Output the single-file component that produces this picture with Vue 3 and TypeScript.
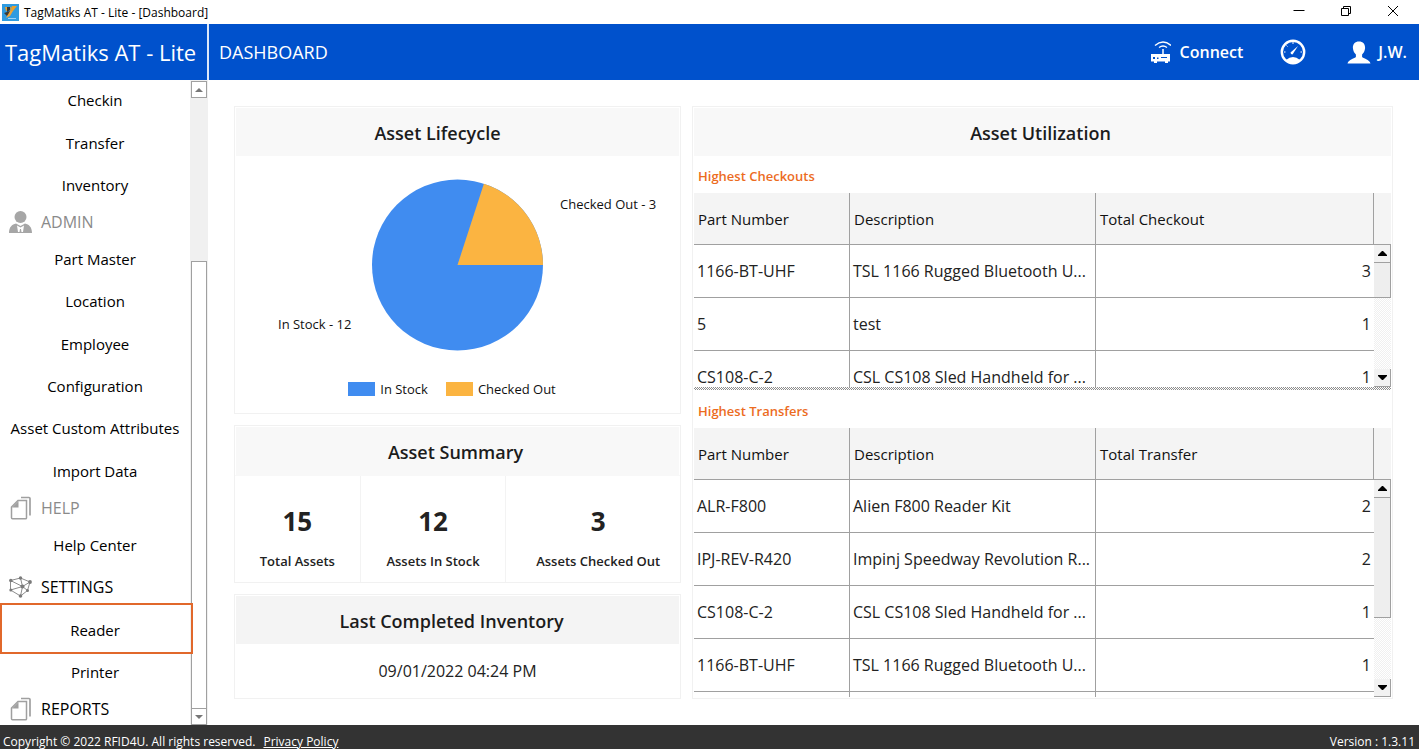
<script setup lang="ts">
interface NavRow {
  label: string
  heading?: boolean
  icon?: 'person' | 'pages' | 'network'
  muted?: boolean
  tall?: boolean
  selected?: boolean
}

interface AssetRow {
  part: string
  description: string
  total: number
}

interface AssetTable {
  id: string
  caption: string
  totalLabel: string
  rows: AssetRow[]
}

const navRows: NavRow[] = [
  { label: 'Checkin' },
  { label: 'Transfer' },
  { label: 'Inventory' },
  { label: 'ADMIN', heading: true, icon: 'person', muted: true },
  { label: 'Part Master' },
  { label: 'Location' },
  { label: 'Employee' },
  { label: 'Configuration' },
  { label: 'Asset Custom Attributes' },
  { label: 'Import Data' },
  { label: 'HELP', heading: true, icon: 'pages', muted: true },
  { label: 'Help Center' },
  { label: 'SETTINGS', heading: true, icon: 'network', tall: true },
  { label: 'Reader', selected: true },
  { label: 'Printer' },
  { label: 'REPORTS', heading: true, icon: 'pages' },
]

const summary = [
  { key: 'total', value: 15, label: 'Total Assets' },
  { key: 'stock', value: 12, label: 'Assets In Stock' },
  { key: 'out', value: 3, label: 'Assets Checked Out' },
]

const tables: AssetTable[] = [
  {
    id: 'checkouts',
    caption: 'Highest Checkouts',
    totalLabel: 'Total Checkout',
    rows: [
      { part: '1166-BT-UHF', description: 'TSL 1166 Rugged Bluetooth U...', total: 3 },
      { part: '5', description: 'test', total: 1 },
      { part: 'CS108-C-2', description: 'CSL CS108 Sled Handheld for ...', total: 1 },
    ],
  },
  {
    id: 'transfers',
    caption: 'Highest Transfers',
    totalLabel: 'Total Transfer',
    rows: [
      { part: 'ALR-F800', description: 'Alien F800 Reader Kit', total: 2 },
      { part: 'IPJ-REV-R420', description: 'Impinj Speedway Revolution R...', total: 2 },
      { part: 'CS108-C-2', description: 'CSL CS108 Sled Handheld for ...', total: 1 },
      { part: '1166-BT-UHF', description: 'TSL 1166 Rugged Bluetooth U...', total: 1 },
    ],
  },
]
</script>

<template>
  <div class="window">
    <div class="titlebar">
      <svg class="app-icon" width="17" height="17" viewBox="0 0 17 17" aria-hidden="true">
        <rect width="17" height="17" fill="#2f9be0" />
        <path d="M3 3h6l-1 3-4 1zM10 2l5 0-4 5-3 0z" fill="#e9a02c" />
        <path d="M5 3h3v3l-3 2zM2 9l6-2 2 1-5 4z" fill="#3b3a34" />
        <path d="M8 7l3 0-3 5-4 2z" fill="#f0a53a" />
        <path d="M6 14h8v1H6z" fill="#9ed2f5" />
      </svg>
      <span class="window-title">TagMatiks AT - Lite - [Dashboard]</span>
      <div class="window-buttons">
        <button type="button" aria-label="Minimize">
          <svg width="12" height="12" viewBox="0 0 12 12"><path d="M0.5 5.5h11" stroke="#000" /></svg>
        </button>
        <button type="button" aria-label="Restore">
          <svg width="12" height="12" viewBox="0 0 12 12" fill="none" stroke="#000">
            <path d="M1.500 3.500h7v7h-7z" /><path d="M3.500 3.500v-2h7v7h-2" />
          </svg>
        </button>
        <button type="button" aria-label="Close">
          <svg width="12" height="12" viewBox="0 0 12 12"><path d="M1 1l10 10M11 1L1 11" stroke="#000" /></svg>
        </button>
      </div>
    </div>

    <header class="header">
      <div class="brand">TagMatiks AT - Lite</div>
      <h1>DASHBOARD</h1>
      <div class="actions">
        <button type="button" class="action connect">
          <svg width="20" height="23" viewBox="0 0 20 23" fill="none" aria-hidden="true">
            <path d="M4 4.500Q12 -2.500 20 4.500" stroke="#fff" stroke-width="1.400" />
            <path d="M8 6.500Q12 3.500 16 6.500" stroke="#fff" stroke-width="1.300" />
            <path d="M12 8v5" stroke="#fff" stroke-width="1.500" />
            <path d="M0 13h19v7.500H0z" fill="#fff" />
            <path d="M3 20h3v2H3zM14 20h3v2h-3z" fill="#fff" />
            <path d="M2 16h2v2H2zM6 16.500h1.500v1.500H6zM10 16h6v1h-6z" fill="#0051cc" />
          </svg>
          <span>Connect</span>
        </button>
        <button type="button" class="action gauge" aria-label="Performance">
          <svg width="26" height="26" viewBox="0 0 26 26" aria-hidden="true">
            <circle cx="13" cy="13" r="11.200" fill="none" stroke="#fff" stroke-width="2.400" />
            <path d="M6 21Q13 15 20 21Q17 25 13 25T6 21z" fill="#fff" />
            <path d="M10.500 13.500l7.500-6.500-5.500 8.500a2 2 0 0 1-2-2z" fill="#fff" />
            <path d="M4 13h1.500M13 3v2M6.500 6.500l1 1M20.500 13h1.500" stroke="#fff" />
          </svg>
        </button>
        <button type="button" class="action user">
          <svg width="24" height="23" viewBox="0 0 24 23" fill="#fff" aria-hidden="true">
            <path d="M12 0.500c4 0 6.300 2.700 6.100 6.500-.2 3-1.600 5.200-3 6.500v2.500c1 1.500 7.400 2.200 8.400 6.500H.5c1-4.300 7.400-5 8.400-6.500v-2.500c-1.400-1.300-2.800-3.500-3-6.500C5.700 3.200 8 .5 12 .5z" />
          </svg>
          <span>J.W.</span>
        </button>
      </div>
    </header>

    <div class="body">
      <aside class="sidebar">
        <nav class="nav" aria-label="Main">
          <template v-for="row in navRows" :key="row.label">
            <div v-if="row.heading" class="nav-heading" :class="{ muted: row.muted, tall: row.tall }">
              <svg v-if="row.icon === 'person'" width="23" height="22" viewBox="0 0 23 22" aria-hidden="true">
                <circle cx="11.500" cy="6" r="6" fill="#a6a6a6" />
                <path d="M0 22c0-6 3-8.500 7-9.500l4.500 2.500 4.500-2.500c4 1 7 3.500 7 9.500z" fill="#a6a6a6" />
                <path d="M8 14.500l3.500 2 3.500-2-1 6.500h-1.500l-.5-3h-1l-.5 3H9z" fill="#fff" />
              </svg>
              <svg v-else-if="row.icon === 'pages'" width="23" height="24" viewBox="0 0 23 24" fill="none" stroke="#a0a0a0" aria-hidden="true">
                <path d="M9 4.500h8.500v17.500q0 .8-1 .8H3.500q-1 0-1-1V11z" stroke-width="1.500" />
                <path d="M9.500 5v6.500H3z" fill="#a0a0a0" stroke="none" />
                <path d="M12 1.500h8q1 0 1 1v17" stroke-width="1.700" />
              </svg>
              <svg v-else width="23" height="22" viewBox="0 0 23 22" fill="none" stroke="#8c8c8c" aria-hidden="true">
                <path d="M1.500 4.500L11.500 2l9.500 4-2.500 8.500-7 5.500-10-6zM1.500 4.500l12 6L21 6M13.500 10.500L11.500 20M1.500 14l12-3.500L11.500 2M13.500 10.500l5 4" />
                <g fill="#7a7a7a" stroke="none">
                  <circle cx="1.800" cy="4.500" r="1.700" /><circle cx="11.500" cy="2" r="1.700" />
                  <circle cx="21" cy="6" r="1.900" /><circle cx="18.500" cy="14.500" r="1.500" />
                  <circle cx="11.500" cy="20" r="1.800" /><circle cx="1.800" cy="14" r="1.500" />
                  <circle cx="13.500" cy="10.500" r="2" />
                </g>
              </svg>
              <span>{{ row.label }}</span>
            </div>
            <a v-else href="#" class="nav-item" :class="{ selected: row.selected }">{{ row.label }}</a>
          </template>
        </nav>
        <div class="side-scroll">
          <button type="button" aria-label="Scroll menu up">
            <svg width="8" height="4" viewBox="0 0 8 4"><path d="M0 4l4-4 4 4z" fill="#777" /></svg>
          </button>
          <div class="side-track"></div>
          <div class="side-thumb"></div>
          <button type="button" aria-label="Scroll menu down">
            <svg width="8" height="4" viewBox="0 0 8 4"><path d="M0 0l4 4 4-4z" fill="#777" /></svg>
          </button>
        </div>
      </aside>

      <main class="main">
        <div class="left">
          <section class="card lifecycle">
            <h2>Asset Lifecycle</h2>
            <svg class="pie" width="445" height="212" viewBox="0 0 445 212" role="img" aria-label="Assets in stock and checked out">
              <circle cx="222.500" cy="109" r="85.500" fill="#408cf0" />
              <path d="M222.500 109L248.900 27.700A85.500 85.500 0 0 1 308 109z" fill="#fbb441" />
              <text x="325" y="53">Checked Out - 3</text>
              <text x="43" y="173">In Stock - 12</text>
            </svg>
            <div class="legend">
              <span class="swatch blue"></span><span class="legend-label">In Stock</span>
              <span class="swatch orange"></span><span class="legend-label">Checked Out</span>
            </div>
          </section>

          <section class="card summary">
            <h2>Asset Summary</h2>
            <div class="stats">
              <div v-for="s in summary" :key="s.key" class="stat" :class="s.key">
                <strong>{{ s.value }}</strong>
                <span>{{ s.label }}</span>
              </div>
            </div>
          </section>

          <section class="card last">
            <h2>Last Completed Inventory</h2>
            <p>09/01/2022 04:24 PM</p>
          </section>
        </div>

        <section class="card utilization">
          <h2>Asset Utilization</h2>
          <div v-for="t in tables" :key="t.id" class="block" :class="t.id">
            <h3 :id="t.id">{{ t.caption }}</h3>
            <div class="viewport">
              <table :aria-labelledby="t.id">
                <colgroup><col class="c-part" /><col class="c-desc" /><col /></colgroup>
                <thead>
                  <tr><th scope="col">Part Number</th><th scope="col">Description</th><th scope="col">{{ t.totalLabel }}</th></tr>
                </thead>
                <tbody>
                  <tr v-for="r in t.rows" :key="r.part">
                    <td>{{ r.part }}</td><td>{{ r.description }}</td><td class="num">{{ r.total }}</td>
                  </tr>
                  <tr v-if="t.id === 'transfers'"><td></td><td></td><td class="num"></td></tr>
                </tbody>
              </table>
              <div class="scroll">
                <div class="cap"></div>
                <button type="button" aria-label="Scroll up">
                  <svg width="9" height="5" viewBox="0 0 9 5"><path d="M0 5V4l4-4h1l4 4v1z" fill="#000" /></svg>
                </button>
                <div class="thumb"></div>
                <div class="track"></div>
                <button type="button" aria-label="Scroll down">
                  <svg width="9" height="5" viewBox="0 0 9 5"><path d="M0 0v1l4 4h1l4-4V0z" fill="#000" /></svg>
                </button>
              </div>
            </div>
          </div>
        </section>
      </main>
    </div>

    <footer class="footer">
      <span>Copyright © 2022 RFID4U. All rights reserved.</span>
      <a href="#">Privacy Policy</a>
      <span class="version">Version : 1.3.11</span>
    </footer>
  </div>
</template>

<style>
body {
  background: #fff;
}
</style>

<style scoped>
* {
  box-sizing: border-box;
}
.window {
  display: flex;
  flex-direction: column;
  height: 100vh;
  overflow: hidden;
  font-family: 'Open Sans', 'Noto Sans', sans-serif;
  font-size: 15px;
  color: #111;
}
button {
  margin: 0;
  padding: 0;
  border: 0;
  background: none;
  color: inherit;
  font: inherit;
}
svg {
  display: block;
  flex: none;
}
h1,
h2,
h3,
p {
  margin: 0;
}

.titlebar {
  display: flex;
  flex: none;
  align-items: center;
  height: 24px;
  padding-left: 2px;
  font-size: 12px;
  color: #000;
}
.window-title {
  margin-left: 5px;
}
.window-buttons {
  display: flex;
  margin-left: auto;
  padding-bottom: 3px;
}
.window-buttons button {
  display: flex;
  align-items: center;
  justify-content: center;
  width: 47px;
  height: 21px;
}
.window-buttons button:last-child {
  margin-right: 3px;
}

.header {
  display: flex;
  flex: none;
  align-items: center;
  height: 56px;
  background: #0051cc;
  color: #fff;
}
.brand {
  display: flex;
  align-items: center;
  width: 209px;
  height: 56px;
  padding-left: 5px;
  border-right: 2px solid #dce8fa;
  font-size: 22px;
  font-weight: 500;
  white-space: nowrap;
}
h1 {
  margin-left: 10px;
  font-size: 18px;
  font-weight: 500;
}
.actions {
  display: flex;
  align-items: center;
  margin-left: auto;
  padding-right: 12px;
  font-size: 16px;
  font-weight: 600;
}
.action {
  display: flex;
  align-items: center;
  gap: 9px;
}
.gauge {
  margin-left: 37px;
}
.user {
  gap: 7px;
  margin-left: 41px;
}

.body {
  display: flex;
  flex: 1;
  min-height: 0;
}
.sidebar {
  display: flex;
  flex: none;
  width: 208px;
}
.nav {
  display: flex;
  flex: none;
  flex-direction: column;
  width: 190px;
  margin-top: -1px;
}
.nav-item {
  position: relative;
  display: flex;
  flex: 4 1 0;
  align-items: center;
  justify-content: center;
  min-height: 0;
  color: #000;
  text-decoration: none;
  white-space: nowrap;
}
.nav-item.selected::after {
  content: '';
  position: absolute;
  z-index: 1;
  inset: -5px -3px -3px 0;
  border: 2px solid #e1682b;
}
.nav-heading {
  display: flex;
  flex: 3 1 0;
  align-items: center;
  gap: 9px;
  min-height: 0;
  padding-left: 9px;
  font-size: 16px;
  color: #000;
}
.nav-heading.muted {
  color: #8a8a8a;
}
.nav-heading.tall {
  flex-grow: 4;
}
.side-scroll {
  display: flex;
  flex-direction: column;
  width: 18px;
  padding: 1px 1px 0;
  background: #f0f0f0;
}
.side-scroll button {
  display: flex;
  flex: none;
  align-items: center;
  justify-content: center;
  height: 17px;
  border: 1px solid #a0a0a0;
  background: #fff;
}
.side-track {
  flex: 163;
}
.side-thumb {
  flex: 447;
  border: 1px solid #a0a0a0;
  border-bottom: 0;
  background: #fff;
}

.main {
  display: grid;
  flex: 1;
  grid-template-columns: minmax(0, 447fr) minmax(0, 701fr);
  gap: 11px;
  min-width: 0;
  padding: 26px;
}
.left {
  display: flex;
  flex-direction: column;
  gap: 11px;
  min-height: 0;
}
.card {
  display: flex;
  flex-direction: column;
  min-height: 0;
  padding-top: 1px;
  border: 1px solid #f1f1f1;
  background: #fff;
}
h2 {
  display: flex;
  flex: none;
  align-items: center;
  justify-content: center;
  height: 48px;
  margin: 0 1px;
  padding-top: 2px;
  padding-right: 4px;
  background: #f8f8f8;
  font-size: 18px;
  font-weight: 600;
  color: #1c1c1c;
}
.lifecycle {
  flex: 306;
}
.lifecycle h2 {
  padding-right: 40px;
}
.pie {
  align-self: center;
  font-size: 13px;
  fill: #111;
}
.legend {
  display: flex;
  align-items: center;
  justify-content: center;
  padding: 12px 11px 0 0;
  font-size: 13px;
}
.swatch {
  width: 27px;
  height: 14px;
  margin-right: 5px;
}
.blue {
  background: #408cf0;
}
.orange {
  margin-left: 18px;
  background: #fbb441;
}
.summary {
  flex: 155;
}
.stats {
  display: flex;
  flex: 1;
  border-top: 1px solid #f8f8f8;
}
.stat {
  display: flex;
  flex-direction: column;
  align-items: center;
  justify-content: center;
  gap: 13px;
  padding-top: 14px;
  border-left: 1px solid #f3f3f3;
  font-size: 13px;
  font-weight: 600;
  color: #222;
}
.stat strong {
  font-size: 26px;
  font-weight: 700;
  line-height: 36px;
}
.stat.total {
  flex: 125;
  border-left: 0;
}
.stat.stock {
  flex: 145;
}
.stat.out {
  flex: 164;
  padding-left: 10px;
}
.last {
  flex: 102;
}
.last h2 {
  padding-right: 12px;
  background: #f4f4f4;
}
.last p {
  display: flex;
  flex: 1;
  align-items: center;
  justify-content: center;
  font-size: 16px;
  color: #222;
}

.utilization {
  padding: 1px 1px 0;
}
.utilization h2 {
  margin: 0;
}
.block {
  display: flex;
  flex-direction: column;
}
.transfers {
  flex: 1;
  min-height: 0;
  padding-bottom: 1px;
}
h3 {
  flex: none;
  height: 37px;
  padding: 0 4px;
  font-size: 13px;
  font-weight: 600;
  line-height: 40px;
  color: #ec6c1f;
}
.viewport {
  display: flex;
  height: 194px;
  overflow: hidden;
}
.transfers .viewport {
  flex: 1;
  height: auto;
  min-height: 0;
}
.checkouts::after {
  content: '';
  height: 3px;
  margin-bottom: 1px;
  background: repeating-conic-gradient(#8c8c8c 0 25%, #fff 0 50%) 0 0 / 2px 2px;
}
table {
  flex: 1;
  width: 100%;
  height: max-content;
  min-width: 0;
  table-layout: fixed;
  border-collapse: separate;
  border-spacing: 0;
}
.c-part {
  width: 156px;
}
.c-desc {
  width: 246px;
}
th,
td {
  height: 53px;
  padding: 0 3px;
  border-right: 1px solid #a0a0a0;
  border-bottom: 1px solid #a0a0a0;
  overflow: hidden;
  text-align: left;
  white-space: nowrap;
}
th {
  height: 52px;
  padding-left: 4px;
  background: #f4f4f4;
  font-weight: 400;
}
td {
  font-size: 16px;
  color: #222;
}
td.num {
  border-right: 0;
  text-align: right;
}
.scroll {
  display: flex;
  flex: none;
  flex-direction: column;
  width: 17px;
}
.cap {
  flex: none;
  height: 52px;
  border-bottom: 1px solid #a0a0a0;
  background: #f4f4f4;
}
.scroll button {
  display: flex;
  flex: none;
  align-items: center;
  justify-content: center;
  height: 18px;
  border: solid #a0a0a0;
  border-width: 0 1px 1px 0;
  background: #f2f2f2;
}
.thumb {
  flex: 34;
  border: solid #a0a0a0;
  border-width: 0 1px 1px 0;
  background: #eee;
}
.track {
  flex: 72;
  background: repeating-conic-gradient(#f0f0f0 0 25%, #fff 0 50%) 0 0 / 2px 2px;
}
.transfers .thumb {
  flex-grow: 120;
}
.transfers .track {
  flex-grow: 62;
}

.footer {
  display: flex;
  flex: none;
  gap: 8px;
  height: 24px;
  padding: 9px 4px 0 3px;
  background: #333;
  font-size: 12px;
  line-height: 16px;
  color: #fff;
}
.footer a {
  color: #fff;
}
.version {
  margin-left: auto;
}
</style>
